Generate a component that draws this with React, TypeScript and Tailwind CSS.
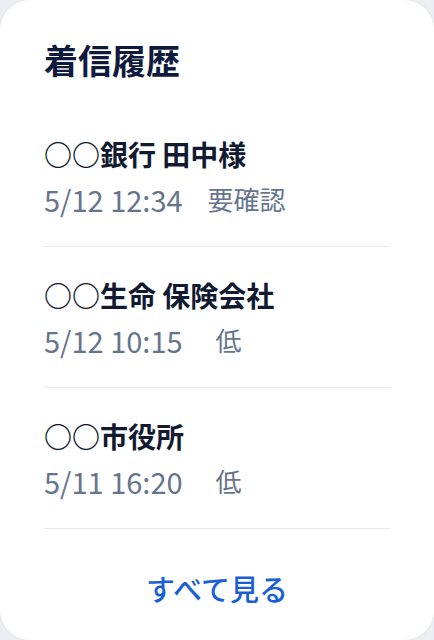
const calls = [
  { name: '○○銀行 田中様', time: '5/12 12:34', level: '要確認', gap: 'ml-[25px]' },
  { name: '○○生命 保険会社', time: '5/12 10:15', level: '低', gap: 'ml-[33px]' },
  { name: '○○市役所', time: '5/11 16:20', level: '低', gap: 'ml-[33px]' },
];

export default function App() {
  return (
    <div
      className="min-h-[640px] w-[434px] bg-[#eceef1]"
      style={{ fontFamily: '"Noto Sans CJK JP", "Noto Sans", sans-serif' }}
    >
      <div className="h-[640px] rounded-[30px] bg-white px-[44px] pt-[39px] shadow-[0_0_3px_rgba(0,0,0,0.06)]">
        <h2 className="text-[34px] font-bold leading-[42px] text-[#0f1a3c]">着信履歴</h2>
        <ul className="mt-[25px]">
          {calls.map((c) => (
            <li key={c.name} className="border-b border-[#e6eaf0] pb-[29px] pt-[28px]">
              <p className="text-[28px] font-bold leading-[40px] text-[#121a32]">{c.name}</p>
              <div className="mt-[7px] flex h-[36px] text-[#66758d]">
                <span className="text-[29px] leading-[36px]">{c.time}</span>
                <span className={`text-[26px] leading-[36px] ${c.gap}`}>{c.level}</span>
              </div>
            </li>
          ))}
        </ul>
        <div className="mt-[39px] flex justify-center">
          <button className="text-[29px] font-medium leading-[40px] text-[#1a5fd6]">すべて見る</button>
        </div>
      </div>
    </div>
  );
}
